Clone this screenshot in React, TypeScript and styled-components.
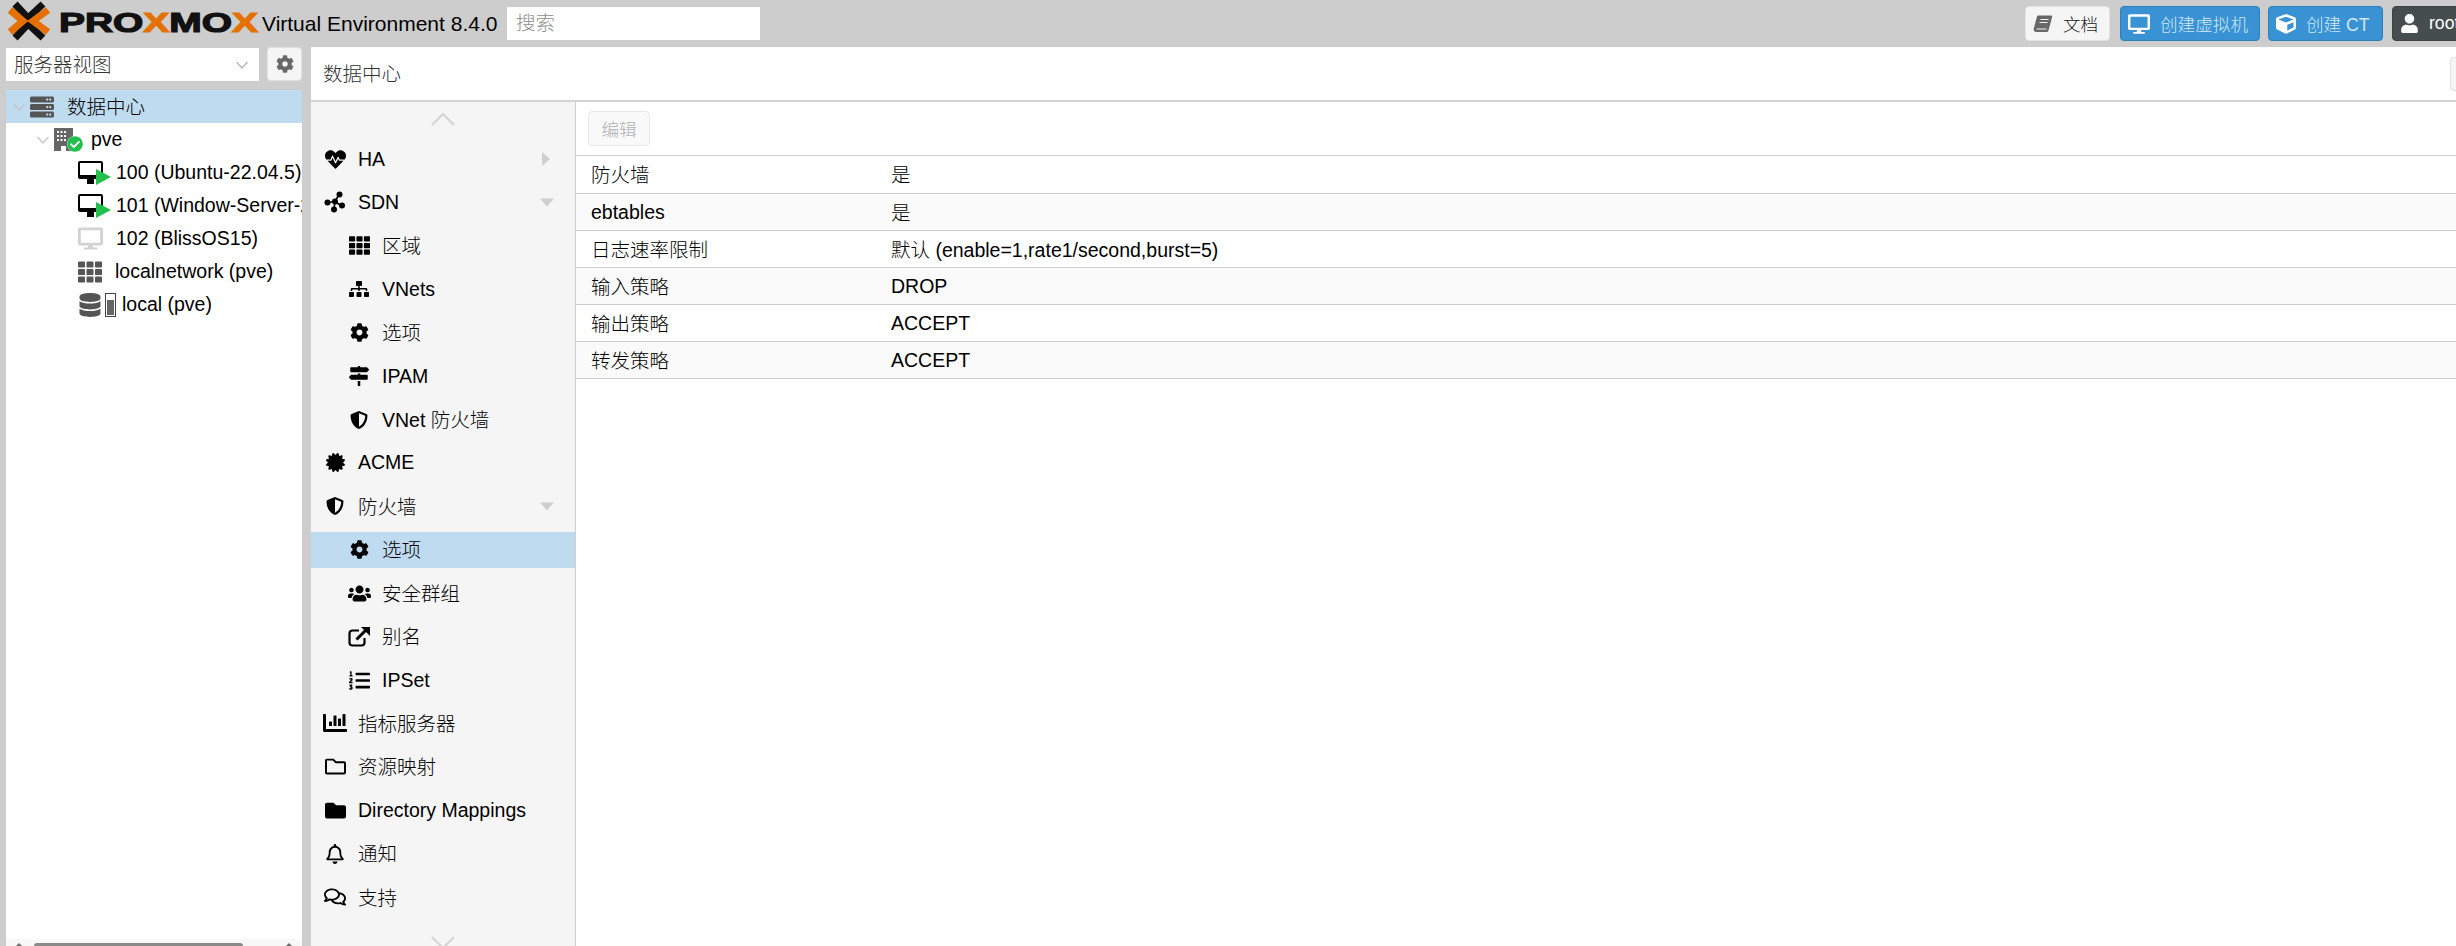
import * as React from 'react';
import styled, { createGlobalStyle } from 'styled-components';
import {
  FaCertificate, FaChartBar, FaCheckCircle, FaCog, FaCube, FaDatabase, FaDesktop, FaFolder,
  FaHeartbeat, FaListOl, FaMapSigns, FaRegBell, FaRegComments, FaServer, FaRegFolder, FaShieldAlt,
  FaSitemap, FaTh, FaUser, FaUsers,
} from 'react-icons/fa';

const GlobalStyle = createGlobalStyle`
  html, body {
    margin: 0;
    height: 100%;
    overflow: hidden;
    background: #cdcdcd;
  }
  * { box-sizing: border-box; }
  body {
    font-family: "Liberation Sans", "Noto Sans CJK SC", sans-serif;
    font-size: 19.5px;
    font-weight: 300;
    color: #000;
  }
`;

const Page = styled.div`
  width: 2456px;
  height: 946px;
  display: flex;
  flex-direction: column;
  overflow: hidden;
`;

const Header = styled.header`
  height: 47px;
  flex: none;
  display: flex;
  align-items: center;
`;

const LogoBox = styled.div`
  width: 262px;
  height: 47px;
  flex: none;
`;

const Version = styled.div`
  width: 245px;
  flex: none;
  font-size: 21px;
  white-space: nowrap;
`;

const Search = styled.div`
  width: 253px;
  height: 33px;
  flex: none;
  background: #fff;
  color: #8f8f8f;
  padding-left: 9px;
  line-height: 33px;
`;

const Spacer = styled.div`
  flex: 1;
`;

const HeadButton = styled.div<{ $kind: 'plain' | 'blue' | 'dark'; $w: number; $gap?: number }>`
  width: ${(p) => p.$w}px;
  height: 35px;
  flex: none;
  margin-right: ${(p) => p.$gap ?? 8}px;
  display: flex;
  align-items: center;
  gap: 10px;
  padding-left: 7px;
  border-radius: 4px;
  font-size: 17.6px;
  white-space: nowrap;
  background: ${(p) => (p.$kind === 'plain' ? '#f5f5f5' : p.$kind === 'blue' ? '#3892d4' : '#464d4d')};
  border: 1px solid ${(p) => (p.$kind === 'plain' ? '#e2e2e2' : p.$kind === 'blue' ? '#2f7fb8' : '#3d4343')};
  color: ${(p) => (p.$kind === 'plain' ? '#222' : p.$kind === 'blue' ? '#d3e8f8' : '#fff')};
  svg { color: ${(p) => (p.$kind === 'plain' ? '#686868' : '#fff')}; flex: none; }
`;

const RootClip = styled.div`
  width: 64px;
  flex: none;
  overflow: hidden;
`;

const Body = styled.div`
  flex: 1;
  min-height: 0;
  display: flex;
  padding-left: 6px;
`;

const Side = styled.aside`
  width: 296px;
  flex: none;
  display: flex;
  flex-direction: column;
`;

const SideBar = styled.div`
  height: 43px;
  flex: none;
  display: flex;
  align-items: flex-start;
  justify-content: space-between;
  padding-top: 1px;
`;

const ViewSelect = styled.div`
  width: 253px;
  height: 33px;
  background: #fff;
  color: #333;
  display: flex;
  align-items: center;
  justify-content: space-between;
  padding: 0 11px 0 8px;
`;

const GearButton = styled.div`
  width: 35px;
  height: 34px;
  margin-top: -1px;
  background: #f5f5f5;
  border: 1px solid #e2e2e2;
  border-radius: 4px;
  display: flex;
  align-items: center;
  justify-content: center;
  color: #686868;
`;

const Tree = styled.div`
  flex: 1;
  min-height: 0;
  background: #fff;
  display: flex;
  flex-direction: column;
`;

const TreeRow = styled.div<{ $indent: number; $selected?: boolean }>`
  height: 33px;
  flex: none;
  display: flex;
  align-items: center;
  padding-left: ${(p) => p.$indent}px;
  white-space: nowrap;
  overflow: hidden;
  background: ${(p) => (p.$selected ? '#bfdbf0' : 'transparent')};
`;

const Expander = styled.span`
  width: 17px;
  flex: none;
  display: flex;
`;

const TreeIcon = styled.span<{ $w: number }>`
  position: relative;
  width: ${(p) => p.$w}px;
  height: 33px;
  flex: none;
  display: flex;
  align-items: center;
`;

const Badge = styled.span<{ $r: number; $b: number }>`
  position: absolute;
  right: ${(p) => p.$r}px;
  bottom: ${(p) => p.$b}px;
  display: flex;
`;

const StatusDot = styled.span`
  display: flex;
  background: #fff;
  border-radius: 50%;
`;

const Battery = styled.span`
  width: 11px;
  height: 24px;
  flex: none;
  margin-right: 6px;
  border: 1px solid #444;
  display: flex;
  align-items: flex-end;
  padding: 1px;
  &::before {
    content: '';
    width: 100%;
    height: 72%;
    background: #666;
  }
`;

const Track = styled.div`
  height: 7px;
  flex: none;
  margin-top: auto;
  background: #f8f8f8;
  display: flex;
  align-items: flex-end;
  padding: 0 10px;
`;

const Thumb = styled.div`
  width: 209px;
  height: 3px;
  margin: 0 auto 0 12px;
  background: #8a8a8a;
  border-radius: 3px 3px 0 0;
`;

const TrackArrow = styled.span`
  width: 6px;
  height: 3px;
  background: #6e6e6e;
  clip-path: polygon(50% 0, 100% 100%, 0 100%);
`;

const Content = styled.main`
  flex: 1;
  min-width: 0;
  margin-left: 9px;
  background: #fff;
  display: flex;
  flex-direction: column;
`;

const TitleBar = styled.div`
  height: 55px;
  flex: none;
  display: flex;
  align-items: center;
  justify-content: space-between;
  padding-left: 12px;
  border-bottom: 2px solid #d4d4d4;
  color: #333;
`;

const TitleHelp = styled.div`
  width: 6px;
  height: 34px;
  margin-top: 1px;
  background: #f5f5f5;
  border: 1px solid #e2e2e2;
  border-right: 0;
  border-radius: 4px 0 0 4px;
`;

const Columns = styled.div`
  flex: 1;
  min-height: 0;
  display: flex;
`;

const Nav = styled.nav`
  width: 265px;
  flex: none;
  background: #f5f5f5;
  border-right: 1px solid #cfcfcf;
  display: flex;
  flex-direction: column;
  overflow: hidden;
`;

const ScrollArrow = styled.div<{ $bottom?: boolean }>`
  height: ${(p) => (p.$bottom ? 40 : 39)}px;
  flex: none;
  display: flex;
  justify-content: center;
  padding-top: ${(p) => (p.$bottom ? 21 : 10)}px;
  padding-right: 1px;
  color: #d4d4d4;
`;

const NavList = styled.div`
  display: flex;
  flex-direction: column;
  gap: 7.43px;
`;

const NavItem = styled.div<{ $sub?: boolean; $selected?: boolean }>`
  position: relative;
  height: 36px;
  flex: none;
  display: flex;
  align-items: center;
  padding-left: ${(p) => (p.$sub ? 36 : 12)}px;
  background: ${(p) => (p.$selected ? '#bfdbf0' : 'transparent')};
  white-space: nowrap;
`;

const NavIcon = styled.span`
  width: 24px;
  margin-right: 11px;
  flex: none;
  display: flex;
  align-items: center;
  justify-content: center;
  color: #000;
`;

const Caret = styled.span<{ $dir: 'right' | 'down' }>`
  position: absolute;
  top: 50%;
  left: ${(p) => (p.$dir === 'right' ? 231 : 229)}px;
  width: ${(p) => (p.$dir === 'right' ? 8 : 14)}px;
  height: ${(p) => (p.$dir === 'right' ? 14 : 8)}px;
  transform: translateY(-50%);
  background: #cfcfcf;
  clip-path: ${(p) =>
    p.$dir === 'right' ? 'polygon(0 0, 100% 50%, 0 100%)' : 'polygon(0 0, 100% 0, 50% 100%)'};
`;

const Panel = styled.section`
  flex: 1;
  min-width: 0;
  display: flex;
  flex-direction: column;
`;

const Toolbar = styled.div`
  height: 54px;
  flex: none;
  padding: 9px 0 0 12px;
  border-bottom: 1px solid #cfcfcf;
`;

const EditButton = styled.div`
  width: 62px;
  height: 35px;
  background: #f9f9f9;
  border: 1px solid #e8e8e8;
  border-radius: 4px;
  color: #b0b0b0;
  display: flex;
  align-items: center;
  justify-content: center;
  font-size: 17.6px;
`;

const TableRow = styled.div<{ $alt: boolean; $tall: boolean }>`
  height: ${(p) => (p.$tall ? 38 : 37)}px;
  flex: none;
  display: flex;
  align-items: center;
  padding-left: 15px;
  border-bottom: 1px solid #cfcfcf;
  background: ${(p) => (p.$alt ? '#fafafa' : '#fff')};
  white-space: nowrap;
`;

// the CJK glyphs sit a little lower here than in the original font
const Label = styled.span<{ $cjk: boolean }>`
  padding-bottom: ${(p) => (p.$cjk ? 2 : 0)}px;
`;

const KeyCell = styled(Label)`
  width: 300px;
  flex: none;
`;

const hasCjk = (text: string) => /[^\x00-\x7f]/.test(text);

const rows: [string, string][] = [
  ['防火墙', '是'],
  ['ebtables', '是'],
  ['日志速率限制', '默认 (enable=1,rate1/second,burst=5)'],
  ['输入策略', 'DROP'],
  ['输出策略', 'ACCEPT'],
  ['转发策略', 'ACCEPT'],
];

type NavEntry = {
  label: string;
  icon: React.ReactNode;
  sub?: boolean;
  selected?: boolean;
  caret?: 'right' | 'down';
};

const SdnIcon = () => (
  <svg width="22" height="22" viewBox="0 0 22 22" fill="currentColor">
    <path d="M4 11.5 11 10.5 15 3.5M11 10.5l5 3.5M11 10.5 10 18" stroke="currentColor" strokeWidth="1.6" fill="none" />
    <circle cx="3.5" cy="11.5" r="3" />
    <circle cx="11" cy="10.5" r="3" />
    <circle cx="15.5" cy="3.5" r="3" />
    <circle cx="18" cy="14.5" r="3" />
    <circle cx="10" cy="18.5" r="3" />
  </svg>
);

const ExternalIcon = () => (
  <svg width="22" height="20" viewBox="0 0 22 20" fill="none" stroke="currentColor" strokeWidth="2.2">
    <path d="M11 3.5H4.5A3 3 0 0 0 1.5 6.5v9a3 3 0 0 0 3 3h9a3 3 0 0 0 3-3V11" />
    <path d="M8.5 12.5 18 3" strokeWidth="3" />
    <path d="M13 0h9v9z" fill="currentColor" stroke="none" />
  </svg>
);

const navEntries: NavEntry[] = [
  { label: 'HA', icon: <FaHeartbeat size={21} />, caret: 'right' },
  { label: 'SDN', icon: <SdnIcon />, caret: 'down' },
  { label: '区域', icon: <FaTh size={21} />, sub: true },
  { label: 'VNets', icon: <FaSitemap size={20} />, sub: true },
  { label: '选项', icon: <FaCog size={19} />, sub: true },
  { label: 'IPAM', icon: <FaMapSigns size={20} />, sub: true },
  { label: 'VNet 防火墙', icon: <FaShieldAlt size={18} />, sub: true },
  { label: 'ACME', icon: <FaCertificate size={19} /> },
  { label: '防火墙', icon: <FaShieldAlt size={18} />, caret: 'down' },
  { label: '选项', icon: <FaCog size={19} />, sub: true, selected: true },
  { label: '安全群组', icon: <FaUsers size={23} />, sub: true },
  { label: '别名', icon: <ExternalIcon />, sub: true },
  { label: 'IPSet', icon: <FaListOl size={21} />, sub: true },
  { label: '指标服务器', icon: <FaChartBar size={24} /> },
  { label: '资源映射', icon: <FaRegFolder size={21} /> },
  { label: 'Directory Mappings', icon: <FaFolder size={21} /> },
  { label: '通知', icon: <FaRegBell size={20} /> },
  { label: '支持', icon: <FaRegComments size={22} /> },
];

const Logo = () => (
  <svg width="262" height="47" viewBox="0 0 262 47">
    <path d="M15 4 L28 18 L43 4" fill="none" stroke="#111" strokeWidth="7" />
    <path d="M15 38 L28 24 L43 38" fill="none" stroke="#111" strokeWidth="7" />
    <path d="M10 10 L23 21 L10 32" fill="none" stroke="#e57000" strokeWidth="7" />
    <path d="M48 10 L33 21 L48 32" fill="none" stroke="#e57000" strokeWidth="7" />
    <text
      transform="translate(59 32) scale(1.39 1)"
      fontFamily="Liberation Sans"
      fontWeight="700"
      fontSize="28"
      stroke="#111"
      strokeWidth="1.2"
      fill="#111"
    >
      PRO<tspan fill="#e57000" stroke="#e57000">X</tspan>MO<tspan fill="#e57000" stroke="#e57000">X</tspan>
    </text>
  </svg>
);

const BookIcon = () => (
  <svg width="20" height="20" viewBox="0 0 20 20">
    <path d="M5.2 1.5H18a1.2 1.2 0 0 1 1.1 1.6l-3.6 13.4a2 2 0 0 1-2 1.5H3.2A2.6 2.6 0 0 1 .8 14.6L4 2.6a1.4 1.4 0 0 1 1.2-1.1z" fill="currentColor" />
    <path d="M7.5 5.5h8M6.5 8.5h8M3.5 15h10" stroke="#f5f5f5" strokeWidth="1.2" />
  </svg>
);

const Chevron = ({ color = '#c4c4c4' }: { color?: string }) => (
  <svg width="12" height="8" viewBox="0 0 12 8" fill="none" stroke={color} strokeWidth="1.2">
    <path d="M.5 1 6 7l5.5-6" />
  </svg>
);

const NodeIcon = () => (
  <svg width="19" height="23" viewBox="0 0 19 23">
    <path d="M0 0h19v23H0z" fill="#666" />
    <path d="M3 3h2v2H3zM6.500 3h2v2h-2zM10 3h2v2h-2zM3 7h2v2H3zM6.500 7h2v2h-2zM10 7h2v2h-2zM3 11h2v2H3zM6.500 11h2v2h-2zM10 11h2v2h-2zM7 18h5v5H7z" fill="#fff" />
  </svg>
);

const VmIcon = () => (
  <svg width="25" height="23" viewBox="0 0 25 23">
    <path d="M2 0h21a2 2 0 0 1 2 2v14a2 2 0 0 1-2 2h-7v5H9v-5H2a2 2 0 0 1-2-2V2a2 2 0 0 1 2-2zm0 2v12h21V2z" fill="#000" fillRule="evenodd" />
  </svg>
);

const RunningVm = () => (
  <TreeIcon $w={38}>
    <VmIcon />
    <Badge $r={5} $b={4}>
      <svg width="15" height="16" viewBox="0 0 15 16">
        <path d="M0 0 15 8 0 16z" fill="#21bf4b" />
      </svg>
    </Badge>
  </TreeIcon>
);

const App = () => (
  <Page>
    <GlobalStyle />
    <Header>
      <LogoBox>
        <Logo />
      </LogoBox>
      <Version>Virtual Environment 8.4.0</Version>
      <Search>搜索</Search>
      <Spacer />
      <HeadButton $kind="plain" $w={85} $gap={10}>
        <BookIcon />
        文档
      </HeadButton>
      <HeadButton $kind="blue" $w={140}>
        <FaDesktop size={22} />
        创建虚拟机
      </HeadButton>
      <HeadButton $kind="blue" $w={115} $gap={9}>
        <FaCube size={20} />
        创建 CT
      </HeadButton>
      <RootClip>
        <HeadButton $kind="dark" $w={120} $gap={0}>
          <FaUser size={19} />
          root@pam
        </HeadButton>
      </RootClip>
    </Header>
    <Body>
      <Side>
        <SideBar>
          <ViewSelect>
            <Label $cjk>服务器视图</Label>
            <Chevron color="#b5b5b5" />
          </ViewSelect>
          <GearButton>
            <FaCog size={18} />
          </GearButton>
        </SideBar>
        <Tree>
          <TreeRow $indent={7} $selected>
            <Expander>
              <Chevron />
            </Expander>
            <TreeIcon $w={37}>
              <FaServer size={24} color="#555" />
            </TreeIcon>
            <Label $cjk>数据中心</Label>
          </TreeRow>
          <TreeRow $indent={31}>
            <Expander>
              <Chevron />
            </Expander>
            <TreeIcon $w={37}>
              <NodeIcon />
              <Badge $r={8} $b={4}>
                <StatusDot>
                  <FaCheckCircle size={16} color="#21bf4b" />
                </StatusDot>
              </Badge>
            </TreeIcon>
            pve
          </TreeRow>
          <TreeRow $indent={72}>
            <RunningVm />
            100 (Ubuntu-22.04.5)
          </TreeRow>
          <TreeRow $indent={72}>
            <RunningVm />
            101 (Window-Server-2022)
          </TreeRow>
          <TreeRow $indent={72}>
            <TreeIcon $w={38}>
              <FaDesktop size={25} color="#d2d2d2" />
            </TreeIcon>
            102 (BlissOS15)
          </TreeRow>
          <TreeRow $indent={72}>
            <TreeIcon $w={37}>
              <FaTh size={24} color="#555" />
            </TreeIcon>
            localnetwork (pve)
          </TreeRow>
          <TreeRow $indent={72}>
            <TreeIcon $w={27}>
              <FaDatabase size={24} color="#555" />
            </TreeIcon>
            <Battery />
            local (pve)
          </TreeRow>
          <Track>
            <TrackArrow />
            <Thumb />
            <TrackArrow />
          </Track>
        </Tree>
      </Side>
      <Content>
        <TitleBar>
          <Label $cjk>数据中心</Label>
          <TitleHelp />
        </TitleBar>
        <Columns>
          <Nav>
            <ScrollArrow>
              <svg width="24" height="14" viewBox="0 0 24 14" fill="none" stroke="currentColor" strokeWidth="2">
                <path d="M1 13 12 2l11 11" />
              </svg>
            </ScrollArrow>
            <NavList>
              {navEntries.map((entry, i) => (
                <NavItem key={i} $sub={entry.sub} $selected={entry.selected}>
                  <NavIcon>{entry.icon}</NavIcon>
                  <Label $cjk={hasCjk(entry.label)}>{entry.label}</Label>
                  {entry.caret && <Caret $dir={entry.caret} />}
                </NavItem>
              ))}
            </NavList>
            <ScrollArrow $bottom>
              <svg width="24" height="14" viewBox="0 0 24 14" fill="none" stroke="currentColor" strokeWidth="2">
                <path d="M1 1l11 11L23 1" />
              </svg>
            </ScrollArrow>
          </Nav>
          <Panel>
            <Toolbar>
              <EditButton>编辑</EditButton>
            </Toolbar>
            {rows.map(([k, v], i) => (
              <TableRow key={k} $alt={i % 2 === 1} $tall={i === 0}>
                <KeyCell $cjk={hasCjk(k)}>{k}</KeyCell>
                <Label $cjk={hasCjk(v)}>{v}</Label>
              </TableRow>
            ))}
          </Panel>
        </Columns>
      </Content>
    </Body>
  </Page>
);

export default App;
